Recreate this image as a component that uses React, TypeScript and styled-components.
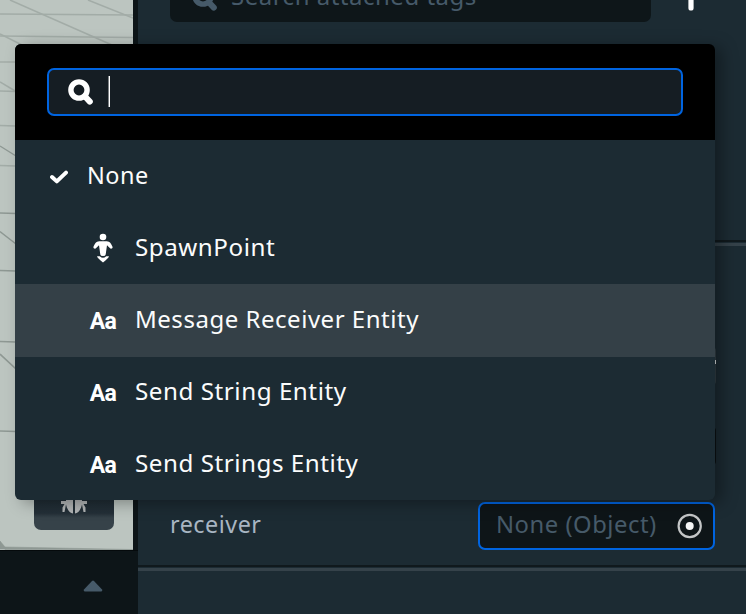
import React from "react";
import styled, { createGlobalStyle } from "styled-components";

const GlobalStyle = createGlobalStyle`
  * { box-sizing: border-box; }
  body { margin: 0; overflow: hidden; background: #1c2b33; font-family: "Noto Sans", sans-serif; }
`;

const Page = styled.div`
  position: relative;
  display: flex;
  width: 746px;
  height: 614px;
  overflow: hidden;
  background: #1c2b33;
`;

const SceneColumn = styled.div`
  display: flex;
  flex-direction: column;
  width: 138px;
  background: #0d1518;
`;

const Viewport = styled.div`
  display: grid;
  width: 133px;
  height: 550px;
  background: #bcc5c0;
  overflow: hidden;
  > * { grid-area: 1 / 1; }
`;

const DebugButton = styled.div`
  align-self: end;
  display: flex;
  justify-content: center;
  align-items: flex-end;
  width: 80px;
  height: 80px;
  padding-bottom: 15px;
  margin: 0 0 20px 34px;
  border-radius: 7px;
  background: linear-gradient(#1e2b33 55%, #232f37 79%, #364249 85%, #364249);
`;

const Footer = styled.div`
  display: flex;
  flex: 1;
  justify-content: center;
  align-items: center;
  padding: 7px 0 0 48px;
  border-top: 1px solid #050a0c;
`;

const Inspector = styled.div`
  display: flex;
  flex-direction: column;
  flex: 1;
`;

const TagRow = styled.div`
  display: flex;
  align-items: flex-start;
  height: 240px;
  padding-left: 32px;
`;

const WideText = styled.span<{ $stretch: number }>`
  display: inline-block;
  font-size: 23px;
  line-height: 32px;
  letter-spacing: 0.5px;
  white-space: nowrap;
  transform: scaleX(${(p) => p.$stretch});
  transform-origin: left center;
`;

const TagSearch = styled.div`
  display: flex;
  align-items: center;
  flex: none;
  width: 481px;
  height: 48px;
  margin-top: -26px;
  padding-left: 22px;
  gap: 13px;
  border-radius: 7px;
  background: #0e1619;
  color: #465a69;
`;

const Placeholder = styled(WideText)`
  margin-top: -4px;
`;

const AddIcon = styled.svg`
  margin: -16px 0 0 27px;
`;

const Divider = styled.div`
  height: 6px;
  border-top: 2px solid #10191d;
  border-bottom: 3px solid #35424a;
`;

const Fields = styled.div`
  display: flex;
  flex-direction: column;
  height: 319px;
  padding: 101px 30px 0 32px;
`;

const SliderField = styled.div`
  display: flex;
  justify-content: flex-end;
  align-items: center;
  height: 38px;
  border-radius: 4px;
  background: #334047;
  padding-bottom: 8px;
`;

const SliderMark = styled.div`
  width: 2px;
  height: 4px;
  background: #e4e7e8;
`;

const ValueField = styled.div`
  height: 38px;
  margin-top: 42px;
  border-radius: 4px;
  background: #0b1114;
`;

const PropertyRow = styled.div`
  display: flex;
  align-items: center;
  justify-content: space-between;
  height: 48px;
  margin: 37px 1px 0 0;
`;

const PropertyLabel = styled(WideText)`
  color: #a8b5c2;
  margin-top: -4px;
`;

const ObjectField = styled.div`
  display: flex;
  align-items: center;
  justify-content: space-between;
  width: 237px;
  height: 48px;
  padding: 0 10px 0 16px;
  border: 2px solid #0064e0;
  border-radius: 7px;
  background: #0e1518;
  color: #465a69;
`;

const ObjectName = styled(WideText)`
  margin-top: -4px;
`;

const Menu = styled.div`
  position: absolute;
  left: 15px;
  top: 44px;
  width: 700px;
  height: 456px;
  border-radius: 6px;
  background: #1c2b33;
  box-shadow: 7px 3px 16px rgba(0, 0, 0, 0.34);
  overflow: hidden;
`;

const MenuHeader = styled.div`
  height: 96px;
  padding: 24px 32px;
  background: #000;
`;

const SearchInput = styled.div`
  display: flex;
  align-items: center;
  height: 48px;
  padding-left: 19px;
  border: 2px solid #0064e0;
  border-radius: 7px;
  background: #151d23;
`;

const Caret = styled.div`
  width: 2px;
  height: 31px;
  margin-left: 14px;
  margin-top: -1px;
  border-left: 1px solid #7d8285;
  background: #fff;
`;

const Option = styled.div<{ $nested?: boolean; $active?: boolean }>`
  display: flex;
  align-items: center;
  height: 72px;
  padding-left: ${(p) => (p.$nested ? 72 : 32)}px;
  background: ${(p) => (p.$active ? "#344047" : "transparent")};
  box-shadow: ${(p) => (p.$active ? "0 1px #344047" : "none")};
`;

const IconSlot = styled.div<{ $wide?: boolean }>`
  display: flex;
  justify-content: center;
  align-items: center;
  flex: none;
  width: ${(p) => (p.$wide ? 32 : 24)}px;
  height: 32px;
  margin-right: 16px;
`;

const OptionText = styled(WideText)`
  color: #fbfcfc;
  margin-top: -2px;
`;

const TextGlyph = styled.span`
  color: #fff;
  font: bold 23px/32px Roboto, sans-serif;
  letter-spacing: -0.6px;
  margin-top: 4px;
`;

const Magnifier = ({ color }: { color: string }) => (
  <svg width="26" height="27" viewBox="0 0 26 27" fill="none" stroke={color} strokeLinecap="round">
    <circle cx="11" cy="11" r="8.1" strokeWidth="5.4" />
    <path d="M17.5 18L21.8 22.6" strokeWidth="6" />
  </svg>
);

const Check = () => (
  <svg width="20" height="16" viewBox="0 0 20 16" fill="none" stroke="#fff" strokeWidth="4" strokeLinecap="round" strokeLinejoin="round">
    <path d="M3 9L7.8 13.4L17 4.6" />
  </svg>
);

const SpawnIcon = () => (
  <svg width="22" height="30" viewBox="0 0 22 30" fill="#fff">
    <circle cx="11" cy="4" r="3.3" />
    <path d="M7.2 8.3H14.8C17.8 8.3 19.6 11.3 20.6 14.1C20.8 15.8 18.4 16.3 17.8 14.9L15 12.3L13.7 21.5Q13.5 23 11 23Q8.5 23 8.3 21.5L7 12.3L4.2 14.9C3.6 16.3 1.2 15.8 1.4 14.1C2.4 11.3 4.2 8.3 7.2 8.3Z" />
    <path d="M5 23.2H7.8Q11 26.2 14.2 23.2H17Q16.5 25.3 11 29.4Q5.5 25.3 5 23.2Z" />
  </svg>
);

const FloorGrid = () => (
  <svg width="133" height="550" fill="none" stroke="#8e9893" strokeWidth="1.5">
    <g opacity=".55">
      <path d="M0 14L133 15M0 36L133 37.5M0 62L16 62M0 91L16 91.5M0 125.5L16 126M0 165.5L16 166" />
      <path d="M88 0L133 18M10 0L112 45M0 34L22 45M0 82L16 91.5" />
    </g>
    <path d="M0 146L16 156M0 213L16 213.5M0 270.5L16 271M0 231.5L16 244" strokeWidth="1.4" />
    <path d="M0 341.5L16 342M0 354L16 369M0 431L16 431.5" strokeWidth="1.7" />
    <path d="M0 541L5 547V549H0ZM5 547L133 549.5H5Z" fill="#8e9893" strokeWidth=".6" />
  </svg>
);

const Bug = () => (
  <svg width="28" height="28" viewBox="0 0 28 28" fill="#b2b5b6">
    <path d="M13 3V26.5C10 26.3 7 22.5 6 17.5L4.5 25H2.5V20.5L4.5 17H1V14H6Q6 4 13 3Z" />
    <path d="M15 3V26.5C18 26.3 21 22.5 22 17.5L23.5 25H25.5V20.5L23.5 17H27V14H22Q22 4 15 3Z" />
  </svg>
);

const Target = () => (
  <svg width="26" height="26" viewBox="0 0 26 26">
    <circle cx="12.7" cy="13" r="11.1" fill="none" stroke="#c4c6c7" strokeWidth="2.2" />
    <circle cx="12.7" cy="13" r="4" fill="#f5f5f5" />
  </svg>
);

const entities = [
  { name: "Message Receiver Entity", active: true, stretch: 1.044 },
  { name: "Send String Entity", active: false, stretch: 1.053 },
  { name: "Send Strings Entity", active: false, stretch: 1.052 },
];

export default function App() {
  return (
    <Page>
      <GlobalStyle />
      <SceneColumn>
        <Viewport>
          <FloorGrid />
          <DebugButton><Bug /></DebugButton>
        </Viewport>
        <Footer>
          <svg width="20" height="12" viewBox="0 0 20 12" fill="#465a69">
            <path d="M1.2 9.3L9 1Q10 0 11 1L18.8 9.3Q20 11.5 18 11.5H2Q0 11.5 1.2 9.3Z" />
          </svg>
        </Footer>
      </SceneColumn>
      <Inspector>
        <TagRow>
          <TagSearch>
            <Magnifier color="#465a69" />
            <Placeholder $stretch={1.042}>Search attached tags</Placeholder>
          </TagSearch>
          <AddIcon width="28" height="28" viewBox="0 0 28 28" stroke="#fff" strokeWidth="5.2" strokeLinecap="round">
            <path d="M13 3V24M3 13H23" />
          </AddIcon>
        </TagRow>
        <Divider />
        <Fields>
          <SliderField><SliderMark /></SliderField>
          <ValueField />
          <PropertyRow>
            <PropertyLabel $stretch={1.015}>receiver</PropertyLabel>
            <ObjectField>
              <ObjectName $stretch={1.035}>None (Object)</ObjectName>
              <Target />
            </ObjectField>
          </PropertyRow>
        </Fields>
        <Divider />
      </Inspector>
      <Menu>
        <MenuHeader>
          <SearchInput><Magnifier color="#fff" /><Caret /></SearchInput>
        </MenuHeader>
        <Option>
          <IconSlot><Check /></IconSlot>
          <OptionText $stretch={1.02}>None</OptionText>
        </Option>
        <Option $nested>
          <IconSlot $wide><SpawnIcon /></IconSlot>
          <OptionText $stretch={1.052}>SpawnPoint</OptionText>
        </Option>
        {entities.map((e) => (
          <Option key={e.name} $nested $active={e.active}>
            <IconSlot $wide><TextGlyph>Aa</TextGlyph></IconSlot>
            <OptionText $stretch={e.stretch}>{e.name}</OptionText>
          </Option>
        ))}
      </Menu>
    </Page>
  );
}
